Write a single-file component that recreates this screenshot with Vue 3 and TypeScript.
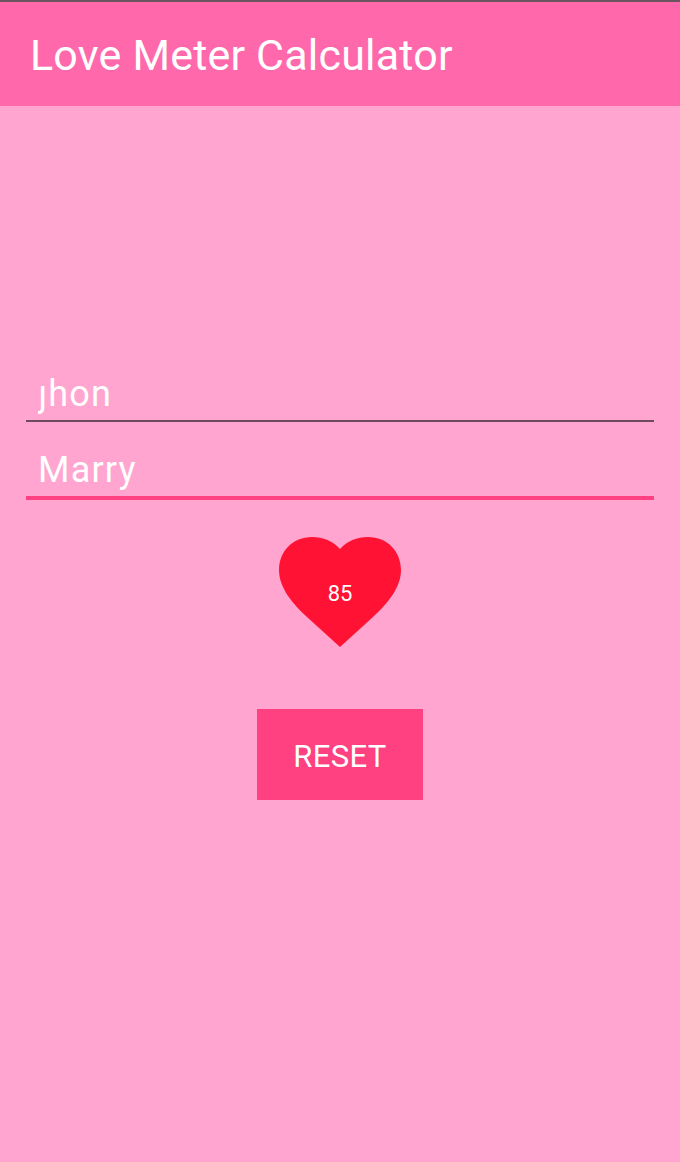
<script setup lang="ts">
import { ref } from 'vue';

const firstName = ref('ȷhon');
const secondName = ref('Marry');
const score = ref(85);
</script>

<template>
  <div class="page">
    <header class="app-bar">
      <h1>Love Meter Calculator</h1>
    </header>

    <main class="content">
      <input v-model="firstName" class="name-input" type="text" />
      <input v-model="secondName" class="name-input focused" type="text" />

      <div class="heart">
        <svg viewBox="0 0 122 112" width="122" height="112">
          <path
            d="M61 13C54 5 44 1 33 1C14 1 0 15 0 34C0 52 14 68 28 81L61 111L94 81C108 68 122 52 122 34C122 15 108 1 89 1C78 1 68 5 61 13Z"
            fill="#ff1233"
          />
        </svg>
        <span class="score">{{ score }}</span>
      </div>

      <button class="reset-button">RESET</button>
    </main>
  </div>
</template>

<style>
html,
body {
  margin: 0;
  padding: 0;
}
</style>

<style scoped>
.page {
  width: 680px;
  height: 1162px;
  background: #ffa5d0;
  font-family: Roboto, sans-serif;
  color: #fff;
  overflow: hidden;
}

.app-bar {
  height: 106px;
  box-sizing: border-box;
  padding: 2px 30px 0;
  display: flex;
  align-items: center;
  background: #ff69ac;
  border-top: 2px solid #6b5560;
}

.app-bar h1 {
  margin: 0;
  font-size: 43px;
  font-weight: 400;
  letter-spacing: 0.2px;
}

.content {
  padding: 0 26px;
  display: flex;
  flex-direction: column;
  align-items: center;
}

.name-input {
  width: 100%;
  height: 50px;
  box-sizing: border-box;
  padding: 0 12px 4px;
  background: none;
  border: none;
  border-bottom: 2px solid #6d4a5c;
  outline: none;
  color: #fff;
  font-family: inherit;
  font-size: 36px;
  letter-spacing: 1.2px;
}

.name-input:first-child {
  margin-top: 266px;
}

.name-input.focused {
  height: 51px;
  margin-top: 27px;
  padding-bottom: 6px;
  border-bottom: 4px solid #ff4081;
}

.heart {
  position: relative;
  margin-top: 36px;
  width: 122px;
  height: 112px;
}

.score {
  position: absolute;
  top: 45px;
  left: 0;
  right: 0;
  text-align: center;
  font-size: 22px;
}

.reset-button {
  margin-top: 61px;
  width: 166px;
  height: 91px;
  padding: 3px 0 0;
  background: #ff4081;
  border: none;
  color: #fff;
  font-family: inherit;
  font-size: 31px;
  letter-spacing: 0.4px;
}
</style>
